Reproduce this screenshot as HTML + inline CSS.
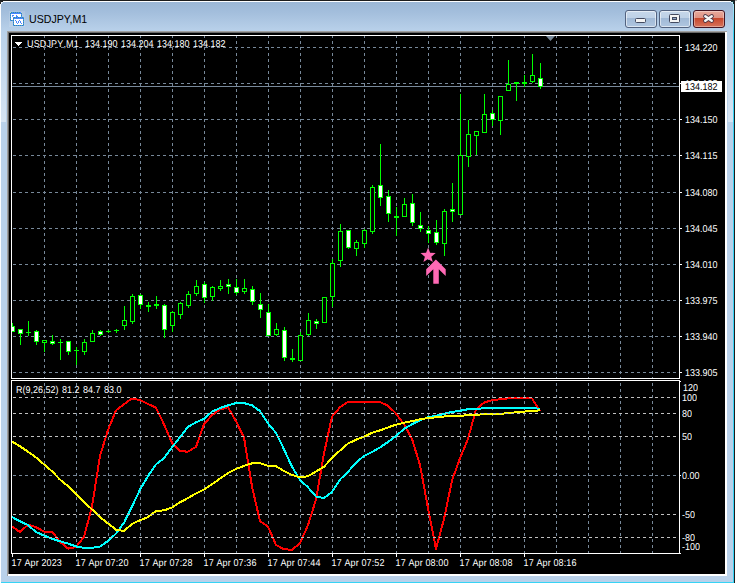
<!DOCTYPE html>
<html><head><meta charset="utf-8"><title>USDJPY,M1</title>
<style>
html,body{margin:0;padding:0;background:#fff;}
body{width:737px;height:583px;overflow:hidden;position:relative;font-family:"Liberation Sans",sans-serif;}
#win{position:absolute;left:0;top:0;width:735px;height:583px;background:#b9d1ea;overflow:hidden;}
#titlegrad{position:absolute;left:0;top:0;width:735px;height:31px;background:linear-gradient(#9ab6d5 0,#a3bedc 12px,#b9d1ea 31px);}
#bt{position:absolute;left:0;top:0;width:735px;height:1px;background:#1c1c1c;}
#wt{position:absolute;left:1px;top:1px;width:733px;height:1px;background:#fdfeff;}
#wl{position:absolute;left:0;top:3px;width:1px;height:580px;background:#fbfdff;}
#cr{position:absolute;left:733px;top:3px;width:1px;height:580px;background:linear-gradient(#a5e5f8 0,#8fe0f8 10px,#36d3f5 30px,#36d3f5 100%);}
#br{position:absolute;left:734px;top:2px;width:1px;height:581px;background:#1c1c1c;}
#cb{position:absolute;left:1px;top:582px;width:733px;height:1px;background:#36d3f5;}
#title{position:absolute;left:29px;top:12.4px;font-size:11.5px;line-height:15px;color:#000;white-space:nowrap;transform-origin:0 0;transform:scaleX(0.922);}
.btn{position:absolute;top:10px;width:30px;height:16px;border:1px solid #52627f;border-radius:3px;background:linear-gradient(#c6d7ea 0,#bed1e7 7px,#a0b9d6 7px,#b0c6e0 16px);box-shadow:inset 0 0 0 1px rgba(255,255,255,.55);}
#bclose{border-color:#431422;background:linear-gradient(#e9a99c 0,#df9283 7px,#c7452b 7px,#d5735c 16px);box-shadow:inset 0 0 0 1px rgba(255,255,255,.35);}
#client{position:absolute;left:7px;top:31px;width:720px;height:545px;background:#000;}
svg{position:absolute;left:0;top:0;}
.t{position:absolute;font-kerning:none;text-rendering:geometricPrecision;transform:scaleY(1.1);transform-origin:0 8px;font-size:9px;line-height:10px;color:#fff;white-space:nowrap;}
</style></head><body>
<div id="win">
<div id="titlegrad"></div>
<div id="bt"></div><div id="wt"></div><div id="wl"></div><div id="cr"></div><div id="br"></div><div id="cb"></div>
<div style="position:absolute;left:1px;top:31px;width:5px;height:91px;background:linear-gradient(rgba(255,255,255,0),rgba(255,255,255,.42))"></div><div style="position:absolute;left:728px;top:31px;width:5px;height:91px;background:linear-gradient(rgba(255,255,255,0),rgba(255,255,255,.42))"></div>
<div id="title">USDJPY,M1</div>
<div class="btn" style="left:625px"></div>
<div class="btn" style="left:659px"></div>
<div class="btn" id="bclose" style="left:693px"></div>
</div>

<svg width="737" height="583" viewBox="0 0 737 583">
<g shape-rendering="crispEdges">
<rect x="0" y="0" width="3" height="2" fill="#1c1c1c"/><rect x="0" y="1" width="1" height="3" fill="#2a2a2a"/><rect x="1" y="2" width="1" height="2" fill="#e8f0f8"/><rect x="2" y="2" width="1" height="1" fill="#dce8f4"/>
<rect x="731" y="1" width="3" height="1" fill="#143840"/><rect x="733" y="2" width="1" height="2" fill="#143840"/><rect x="734" y="0" width="1" height="4" fill="#1c1c1c"/><rect x="731" y="2" width="2" height="1" fill="#c8ecf8"/><rect x="732" y="3" width="1" height="1" fill="#a8e4f6"/><rect x="735" y="0" width="2" height="1" fill="#aaa"/>
<rect x="7" y="31" width="720" height="545" fill="#a0a0a0"/>
<rect x="8" y="32" width="719" height="544" fill="#ffffff"/>
<rect x="8" y="32" width="717" height="542" fill="#696969"/>
<rect x="9" y="33" width="716" height="541" fill="#000"/>
<g><rect x="9" y="11" width="16" height="16" fill="#fff" opacity=".12"/><rect x="10" y="12" width="12" height="9" fill="#4a86ff"/><rect x="11" y="14" width="10" height="6" fill="#fff"/><rect x="12" y="15" width="2" height="1" fill="#4a86ff"/><rect x="12" y="16" width="1" height="1" fill="#7aa6ff"/><rect x="16" y="15" width="1" height="1" fill="#4a86ff"/><rect x="16" y="16" width="2" height="1" fill="#4a86ff"/><rect x="13" y="17" width="11" height="9" fill="#4a86ff"/><rect x="14" y="19" width="9" height="6" fill="#fff"/><g stroke="#2e9a78" stroke-opacity=".75" stroke-dasharray="1 1" fill="none"><path d="M11 12.5H22"/><path d="M10.5 13V21"/><path d="M14 17.5H24"/><path d="M13.5 18V26"/><path d="M23.5 18V26"/><path d="M14 25.5H24"/><path d="M21.5 13V17"/><path d="M11 20.5H13"/></g><rect x="10" y="12" width="1" height="1" fill="#b4cce6"/><rect x="21" y="12" width="1" height="1" fill="#b4cce6"/><g fill="#4a86ff"><rect x="15" y="20" width="1" height="1"/><rect x="16" y="21" width="1" height="1"/><rect x="16" y="22" width="1" height="1"/><rect x="17" y="23" width="1" height="1"/><rect x="18" y="22" width="1" height="1"/><rect x="18" y="21" width="1" height="1"/><rect x="19" y="20" width="1" height="1"/><rect x="20" y="21" width="1" height="1"/><rect x="20" y="22" width="1" height="1"/><rect x="21" y="23" width="1" height="1"/></g></g>
<rect x="635.5" y="18.5" width="10" height="4" rx="1" fill="#f4f4f4" stroke="#434a60" shape-rendering="auto"/>
<rect x="669.5" y="14.5" width="10" height="8" rx="1" fill="#f4f4f4" stroke="#434a60" shape-rendering="auto"/><rect x="672.5" y="17.5" width="4" height="2" fill="#8ea6c6" stroke="#434a60"/>
<g shape-rendering="auto" stroke-linecap="round" fill="none"><path d="M705.3 16.3L711.7 20.7M711.7 16.3L705.3 20.7" stroke="#4d3848" stroke-width="4.3"/><path d="M705.3 16.3L711.7 20.7M711.7 16.3L705.3 20.7" stroke="#f6f6f6" stroke-width="2.5"/></g>
<line x1="12" y1="47.5" x2="679" y2="47.5" stroke="#778899" stroke-dasharray="3 3" stroke-dashoffset="5"/>
<line x1="12" y1="83.5" x2="679" y2="83.5" stroke="#778899" stroke-dasharray="3 3" stroke-dashoffset="5"/>
<line x1="12" y1="119.5" x2="679" y2="119.5" stroke="#778899" stroke-dasharray="3 3" stroke-dashoffset="5"/>
<line x1="12" y1="155.5" x2="679" y2="155.5" stroke="#778899" stroke-dasharray="3 3" stroke-dashoffset="5"/>
<line x1="12" y1="192.5" x2="679" y2="192.5" stroke="#778899" stroke-dasharray="3 3" stroke-dashoffset="5"/>
<line x1="12" y1="228.5" x2="679" y2="228.5" stroke="#778899" stroke-dasharray="3 3" stroke-dashoffset="5"/>
<line x1="12" y1="264.5" x2="679" y2="264.5" stroke="#778899" stroke-dasharray="3 3" stroke-dashoffset="5"/>
<line x1="12" y1="300.5" x2="679" y2="300.5" stroke="#778899" stroke-dasharray="3 3" stroke-dashoffset="5"/>
<line x1="12" y1="336.5" x2="679" y2="336.5" stroke="#778899" stroke-dasharray="3 3" stroke-dashoffset="5"/>
<line x1="12" y1="372.5" x2="679" y2="372.5" stroke="#778899" stroke-dasharray="3 3" stroke-dashoffset="5"/>
<line x1="44.5" y1="36" x2="44.5" y2="378" stroke="#778899" stroke-dasharray="3 3" stroke-dashoffset="1"/>
<line x1="44.5" y1="381" x2="44.5" y2="553" stroke="#778899" stroke-dasharray="3 3" stroke-dashoffset="4"/>
<line x1="76.5" y1="36" x2="76.5" y2="378" stroke="#778899" stroke-dasharray="3 3" stroke-dashoffset="1"/>
<line x1="76.5" y1="381" x2="76.5" y2="553" stroke="#778899" stroke-dasharray="3 3" stroke-dashoffset="4"/>
<line x1="108.5" y1="36" x2="108.5" y2="378" stroke="#778899" stroke-dasharray="3 3" stroke-dashoffset="1"/>
<line x1="108.5" y1="381" x2="108.5" y2="553" stroke="#778899" stroke-dasharray="3 3" stroke-dashoffset="4"/>
<line x1="140.5" y1="36" x2="140.5" y2="378" stroke="#778899" stroke-dasharray="3 3" stroke-dashoffset="1"/>
<line x1="140.5" y1="381" x2="140.5" y2="553" stroke="#778899" stroke-dasharray="3 3" stroke-dashoffset="4"/>
<line x1="172.5" y1="36" x2="172.5" y2="378" stroke="#778899" stroke-dasharray="3 3" stroke-dashoffset="1"/>
<line x1="172.5" y1="381" x2="172.5" y2="553" stroke="#778899" stroke-dasharray="3 3" stroke-dashoffset="4"/>
<line x1="204.5" y1="36" x2="204.5" y2="378" stroke="#778899" stroke-dasharray="3 3" stroke-dashoffset="1"/>
<line x1="204.5" y1="381" x2="204.5" y2="553" stroke="#778899" stroke-dasharray="3 3" stroke-dashoffset="4"/>
<line x1="236.5" y1="36" x2="236.5" y2="378" stroke="#778899" stroke-dasharray="3 3" stroke-dashoffset="1"/>
<line x1="236.5" y1="381" x2="236.5" y2="553" stroke="#778899" stroke-dasharray="3 3" stroke-dashoffset="4"/>
<line x1="268.5" y1="36" x2="268.5" y2="378" stroke="#778899" stroke-dasharray="3 3" stroke-dashoffset="1"/>
<line x1="268.5" y1="381" x2="268.5" y2="553" stroke="#778899" stroke-dasharray="3 3" stroke-dashoffset="4"/>
<line x1="300.5" y1="36" x2="300.5" y2="378" stroke="#778899" stroke-dasharray="3 3" stroke-dashoffset="1"/>
<line x1="300.5" y1="381" x2="300.5" y2="553" stroke="#778899" stroke-dasharray="3 3" stroke-dashoffset="4"/>
<line x1="332.5" y1="36" x2="332.5" y2="378" stroke="#778899" stroke-dasharray="3 3" stroke-dashoffset="1"/>
<line x1="332.5" y1="381" x2="332.5" y2="553" stroke="#778899" stroke-dasharray="3 3" stroke-dashoffset="4"/>
<line x1="364.5" y1="36" x2="364.5" y2="378" stroke="#778899" stroke-dasharray="3 3" stroke-dashoffset="1"/>
<line x1="364.5" y1="381" x2="364.5" y2="553" stroke="#778899" stroke-dasharray="3 3" stroke-dashoffset="4"/>
<line x1="396.5" y1="36" x2="396.5" y2="378" stroke="#778899" stroke-dasharray="3 3" stroke-dashoffset="1"/>
<line x1="396.5" y1="381" x2="396.5" y2="553" stroke="#778899" stroke-dasharray="3 3" stroke-dashoffset="4"/>
<line x1="428.5" y1="36" x2="428.5" y2="378" stroke="#778899" stroke-dasharray="3 3" stroke-dashoffset="1"/>
<line x1="428.5" y1="381" x2="428.5" y2="553" stroke="#778899" stroke-dasharray="3 3" stroke-dashoffset="4"/>
<line x1="460.5" y1="36" x2="460.5" y2="378" stroke="#778899" stroke-dasharray="3 3" stroke-dashoffset="1"/>
<line x1="460.5" y1="381" x2="460.5" y2="553" stroke="#778899" stroke-dasharray="3 3" stroke-dashoffset="4"/>
<line x1="492.5" y1="36" x2="492.5" y2="378" stroke="#778899" stroke-dasharray="3 3" stroke-dashoffset="1"/>
<line x1="492.5" y1="381" x2="492.5" y2="553" stroke="#778899" stroke-dasharray="3 3" stroke-dashoffset="4"/>
<line x1="524.5" y1="36" x2="524.5" y2="378" stroke="#778899" stroke-dasharray="3 3" stroke-dashoffset="1"/>
<line x1="524.5" y1="381" x2="524.5" y2="553" stroke="#778899" stroke-dasharray="3 3" stroke-dashoffset="4"/>
<line x1="556.5" y1="36" x2="556.5" y2="378" stroke="#778899" stroke-dasharray="3 3" stroke-dashoffset="1"/>
<line x1="556.5" y1="381" x2="556.5" y2="553" stroke="#778899" stroke-dasharray="3 3" stroke-dashoffset="4"/>
<line x1="588.5" y1="36" x2="588.5" y2="378" stroke="#778899" stroke-dasharray="3 3" stroke-dashoffset="1"/>
<line x1="588.5" y1="381" x2="588.5" y2="553" stroke="#778899" stroke-dasharray="3 3" stroke-dashoffset="4"/>
<line x1="620.5" y1="36" x2="620.5" y2="378" stroke="#778899" stroke-dasharray="3 3" stroke-dashoffset="1"/>
<line x1="620.5" y1="381" x2="620.5" y2="553" stroke="#778899" stroke-dasharray="3 3" stroke-dashoffset="4"/>
<line x1="652.5" y1="36" x2="652.5" y2="378" stroke="#778899" stroke-dasharray="3 3" stroke-dashoffset="1"/>
<line x1="652.5" y1="381" x2="652.5" y2="553" stroke="#778899" stroke-dasharray="3 3" stroke-dashoffset="4"/>
<line x1="12" y1="475.5" x2="679" y2="475.5" stroke="#778899" stroke-dasharray="3 3" stroke-dashoffset="5"/>
<rect x="12" y="86" width="667" height="1" fill="#778899"/>
<polygon points="546,36 555,36 550.5,41" fill="#778899" shape-rendering="auto"/>
<clipPath id="mc"><rect x="12" y="36" width="667" height="342"/></clipPath><g clip-path="url(#mc)">
<rect x="12" y="323" width="1" height="9" fill="#00ff00"/>
<rect x="10" y="326" width="5" height="6" fill="#00ff00"/>
<rect x="11" y="327" width="3" height="4" fill="#fff"/>
<rect x="20" y="329" width="1" height="16" fill="#00ff00"/>
<rect x="18" y="329" width="5" height="5" fill="#00ff00"/>
<rect x="19" y="330" width="3" height="3" fill="#fff"/>
<rect x="28" y="321" width="1" height="15" fill="#00ff00"/>
<rect x="26" y="332" width="5" height="1" fill="#00ff00"/>
<rect x="36" y="330" width="1" height="15" fill="#00ff00"/>
<rect x="34" y="331" width="5" height="11" fill="#00ff00"/>
<rect x="35" y="332" width="3" height="9" fill="#fff"/>
<rect x="44" y="340" width="1" height="12" fill="#00ff00"/>
<rect x="42" y="340" width="5" height="3" fill="#00ff00"/>
<rect x="43" y="341" width="3" height="1" fill="#000"/>
<rect x="52" y="335" width="1" height="10" fill="#00ff00"/>
<rect x="50" y="341" width="5" height="3" fill="#00ff00"/>
<rect x="51" y="342" width="3" height="1" fill="#fff"/>
<rect x="60" y="339" width="1" height="21" fill="#00ff00"/>
<rect x="58" y="342" width="5" height="1" fill="#00ff00"/>
<rect x="68" y="341" width="1" height="14" fill="#00ff00"/>
<rect x="66" y="341" width="5" height="11" fill="#00ff00"/>
<rect x="67" y="342" width="3" height="9" fill="#fff"/>
<rect x="76" y="347" width="1" height="18" fill="#00ff00"/>
<rect x="74" y="350" width="5" height="1" fill="#00ff00"/>
<rect x="84" y="339" width="1" height="16" fill="#00ff00"/>
<rect x="82" y="342" width="5" height="10" fill="#00ff00"/>
<rect x="83" y="343" width="3" height="8" fill="#000"/>
<rect x="92" y="330" width="1" height="12" fill="#00ff00"/>
<rect x="90" y="333" width="5" height="9" fill="#00ff00"/>
<rect x="91" y="334" width="3" height="7" fill="#000"/>
<rect x="100" y="330" width="1" height="6" fill="#00ff00"/>
<rect x="98" y="331" width="5" height="4" fill="#00ff00"/>
<rect x="99" y="332" width="3" height="2" fill="#fff"/>
<rect x="108" y="330" width="1" height="3" fill="#00ff00"/>
<rect x="106" y="331" width="5" height="1" fill="#00ff00"/>
<rect x="116" y="329" width="1" height="4" fill="#00ff00"/>
<rect x="114" y="330" width="5" height="1" fill="#00ff00"/>
<rect x="124" y="306" width="1" height="24" fill="#00ff00"/>
<rect x="122" y="320" width="5" height="6" fill="#00ff00"/>
<rect x="123" y="321" width="3" height="4" fill="#000"/>
<rect x="132" y="294" width="1" height="30" fill="#00ff00"/>
<rect x="130" y="296" width="5" height="26" fill="#00ff00"/>
<rect x="131" y="297" width="3" height="24" fill="#000"/>
<rect x="140" y="294" width="1" height="15" fill="#00ff00"/>
<rect x="138" y="295" width="5" height="10" fill="#00ff00"/>
<rect x="139" y="296" width="3" height="8" fill="#fff"/>
<rect x="148" y="302" width="1" height="10" fill="#00ff00"/>
<rect x="146" y="305" width="5" height="2" fill="#00ff00"/>
<rect x="156" y="296" width="1" height="13" fill="#00ff00"/>
<rect x="154" y="304" width="5" height="2" fill="#00ff00"/>
<rect x="164" y="304" width="1" height="34" fill="#00ff00"/>
<rect x="162" y="305" width="5" height="25" fill="#00ff00"/>
<rect x="163" y="306" width="3" height="23" fill="#fff"/>
<rect x="172" y="311" width="1" height="21" fill="#00ff00"/>
<rect x="170" y="312" width="5" height="14" fill="#00ff00"/>
<rect x="171" y="313" width="3" height="12" fill="#000"/>
<rect x="180" y="302" width="1" height="17" fill="#00ff00"/>
<rect x="178" y="303" width="5" height="12" fill="#00ff00"/>
<rect x="179" y="304" width="3" height="10" fill="#000"/>
<rect x="188" y="291" width="1" height="17" fill="#00ff00"/>
<rect x="186" y="294" width="5" height="12" fill="#00ff00"/>
<rect x="187" y="295" width="3" height="10" fill="#000"/>
<rect x="196" y="280" width="1" height="16" fill="#00ff00"/>
<rect x="194" y="286" width="5" height="8" fill="#00ff00"/>
<rect x="195" y="287" width="3" height="6" fill="#000"/>
<rect x="204" y="282" width="1" height="21" fill="#00ff00"/>
<rect x="202" y="284" width="5" height="14" fill="#00ff00"/>
<rect x="203" y="285" width="3" height="12" fill="#fff"/>
<rect x="212" y="286" width="1" height="15" fill="#00ff00"/>
<rect x="210" y="287" width="5" height="10" fill="#00ff00"/>
<rect x="211" y="288" width="3" height="8" fill="#000"/>
<rect x="220" y="280" width="1" height="11" fill="#00ff00"/>
<rect x="218" y="286" width="5" height="3" fill="#00ff00"/>
<rect x="219" y="287" width="3" height="1" fill="#000"/>
<rect x="228" y="279" width="1" height="15" fill="#00ff00"/>
<rect x="226" y="284" width="5" height="3" fill="#00ff00"/>
<rect x="227" y="285" width="3" height="1" fill="#fff"/>
<rect x="236" y="279" width="1" height="16" fill="#00ff00"/>
<rect x="234" y="287" width="5" height="6" fill="#00ff00"/>
<rect x="235" y="288" width="3" height="4" fill="#fff"/>
<rect x="244" y="279" width="1" height="15" fill="#00ff00"/>
<rect x="242" y="288" width="5" height="4" fill="#00ff00"/>
<rect x="243" y="289" width="3" height="2" fill="#000"/>
<rect x="252" y="286" width="1" height="19" fill="#00ff00"/>
<rect x="250" y="289" width="5" height="13" fill="#00ff00"/>
<rect x="251" y="290" width="3" height="11" fill="#fff"/>
<rect x="260" y="293" width="1" height="25" fill="#00ff00"/>
<rect x="258" y="304" width="5" height="6" fill="#00ff00"/>
<rect x="259" y="305" width="3" height="4" fill="#fff"/>
<rect x="268" y="304" width="1" height="32" fill="#00ff00"/>
<rect x="266" y="312" width="5" height="24" fill="#00ff00"/>
<rect x="267" y="313" width="3" height="22" fill="#fff"/>
<rect x="276" y="323" width="1" height="13" fill="#00ff00"/>
<rect x="274" y="329" width="5" height="6" fill="#00ff00"/>
<rect x="275" y="330" width="3" height="4" fill="#000"/>
<rect x="284" y="327" width="1" height="34" fill="#00ff00"/>
<rect x="282" y="330" width="5" height="28" fill="#00ff00"/>
<rect x="283" y="331" width="3" height="26" fill="#fff"/>
<rect x="292" y="349" width="1" height="13" fill="#00ff00"/>
<rect x="290" y="358" width="5" height="2" fill="#00ff00"/>
<rect x="300" y="332" width="1" height="29" fill="#00ff00"/>
<rect x="298" y="335" width="5" height="26" fill="#00ff00"/>
<rect x="299" y="336" width="3" height="24" fill="#000"/>
<rect x="308" y="313" width="1" height="23" fill="#00ff00"/>
<rect x="306" y="320" width="5" height="15" fill="#00ff00"/>
<rect x="307" y="321" width="3" height="13" fill="#000"/>
<rect x="316" y="319" width="1" height="10" fill="#00ff00"/>
<rect x="314" y="321" width="5" height="3" fill="#00ff00"/>
<rect x="315" y="322" width="3" height="1" fill="#fff"/>
<rect x="324" y="297" width="1" height="26" fill="#00ff00"/>
<rect x="322" y="297" width="5" height="26" fill="#00ff00"/>
<rect x="323" y="298" width="3" height="24" fill="#000"/>
<rect x="332" y="259" width="1" height="48" fill="#00ff00"/>
<rect x="330" y="263" width="5" height="34" fill="#00ff00"/>
<rect x="331" y="264" width="3" height="32" fill="#000"/>
<rect x="340" y="224" width="1" height="43" fill="#00ff00"/>
<rect x="338" y="231" width="5" height="30" fill="#00ff00"/>
<rect x="339" y="232" width="3" height="28" fill="#000"/>
<rect x="348" y="230" width="1" height="19" fill="#00ff00"/>
<rect x="346" y="230" width="5" height="18" fill="#00ff00"/>
<rect x="347" y="231" width="3" height="16" fill="#fff"/>
<rect x="356" y="240" width="1" height="16" fill="#00ff00"/>
<rect x="354" y="242" width="5" height="7" fill="#00ff00"/>
<rect x="355" y="243" width="3" height="5" fill="#000"/>
<rect x="364" y="229" width="1" height="19" fill="#00ff00"/>
<rect x="362" y="230" width="5" height="14" fill="#00ff00"/>
<rect x="363" y="231" width="3" height="12" fill="#000"/>
<rect x="372" y="185" width="1" height="49" fill="#00ff00"/>
<rect x="370" y="187" width="5" height="45" fill="#00ff00"/>
<rect x="371" y="188" width="3" height="43" fill="#000"/>
<rect x="380" y="144" width="1" height="62" fill="#00ff00"/>
<rect x="378" y="185" width="5" height="13" fill="#00ff00"/>
<rect x="379" y="186" width="3" height="11" fill="#fff"/>
<rect x="388" y="190" width="1" height="32" fill="#00ff00"/>
<rect x="386" y="196" width="5" height="18" fill="#00ff00"/>
<rect x="387" y="197" width="3" height="16" fill="#fff"/>
<rect x="396" y="207" width="1" height="29" fill="#00ff00"/>
<rect x="394" y="216" width="5" height="2" fill="#00ff00"/>
<rect x="404" y="198" width="1" height="19" fill="#00ff00"/>
<rect x="402" y="204" width="5" height="13" fill="#00ff00"/>
<rect x="403" y="205" width="3" height="11" fill="#000"/>
<rect x="412" y="194" width="1" height="32" fill="#00ff00"/>
<rect x="410" y="203" width="5" height="20" fill="#00ff00"/>
<rect x="411" y="204" width="3" height="18" fill="#fff"/>
<rect x="420" y="212" width="1" height="20" fill="#00ff00"/>
<rect x="418" y="225" width="5" height="4" fill="#00ff00"/>
<rect x="419" y="226" width="3" height="2" fill="#fff"/>
<rect x="428" y="226" width="1" height="17" fill="#00ff00"/>
<rect x="426" y="230" width="5" height="4" fill="#00ff00"/>
<rect x="427" y="231" width="3" height="2" fill="#fff"/>
<rect x="436" y="220" width="1" height="25" fill="#00ff00"/>
<rect x="434" y="232" width="5" height="11" fill="#00ff00"/>
<rect x="435" y="233" width="3" height="9" fill="#fff"/>
<rect x="444" y="209" width="1" height="47" fill="#00ff00"/>
<rect x="442" y="211" width="5" height="33" fill="#00ff00"/>
<rect x="443" y="212" width="3" height="31" fill="#000"/>
<rect x="452" y="183" width="1" height="39" fill="#00ff00"/>
<rect x="450" y="209" width="5" height="3" fill="#00ff00"/>
<rect x="451" y="210" width="3" height="1" fill="#fff"/>
<rect x="460" y="94" width="1" height="121" fill="#00ff00"/>
<rect x="458" y="155" width="5" height="60" fill="#00ff00"/>
<rect x="459" y="156" width="3" height="58" fill="#000"/>
<rect x="468" y="120" width="1" height="47" fill="#00ff00"/>
<rect x="466" y="134" width="5" height="23" fill="#00ff00"/>
<rect x="467" y="135" width="3" height="21" fill="#000"/>
<rect x="476" y="131" width="1" height="24" fill="#00ff00"/>
<rect x="474" y="131" width="5" height="5" fill="#00ff00"/>
<rect x="475" y="132" width="3" height="3" fill="#000"/>
<rect x="484" y="94" width="1" height="39" fill="#00ff00"/>
<rect x="482" y="114" width="5" height="19" fill="#00ff00"/>
<rect x="483" y="115" width="3" height="17" fill="#000"/>
<rect x="492" y="110" width="1" height="16" fill="#00ff00"/>
<rect x="490" y="113" width="5" height="7" fill="#00ff00"/>
<rect x="491" y="114" width="3" height="5" fill="#fff"/>
<rect x="500" y="96" width="1" height="39" fill="#00ff00"/>
<rect x="498" y="96" width="5" height="25" fill="#00ff00"/>
<rect x="499" y="97" width="3" height="23" fill="#000"/>
<rect x="508" y="60" width="1" height="31" fill="#00ff00"/>
<rect x="506" y="84" width="5" height="7" fill="#00ff00"/>
<rect x="507" y="85" width="3" height="5" fill="#000"/>
<rect x="516" y="82" width="1" height="19" fill="#00ff00"/>
<rect x="514" y="82" width="5" height="2" fill="#00ff00"/>
<rect x="524" y="75" width="1" height="12" fill="#00ff00"/>
<rect x="522" y="82" width="5" height="2" fill="#00ff00"/>
<rect x="532" y="54" width="1" height="29" fill="#00ff00"/>
<rect x="530" y="75" width="5" height="7" fill="#00ff00"/>
<rect x="531" y="76" width="3" height="5" fill="#000"/>
<rect x="540" y="63" width="1" height="26" fill="#00ff00"/>
<rect x="538" y="78" width="5" height="9" fill="#00ff00"/>
<rect x="539" y="79" width="3" height="7" fill="#fff"/>
</g>
</g>
<polygon points="428.1,247.6 430.1,252.8 435.7,253.1 431.3,256.7 432.8,262.1 428.1,259.0 423.4,262.1 424.9,256.7 420.5,253.1 426.1,252.8" fill="#ff69b4"/>
<polygon points="435.9,259.4 445.7,269.3 445.7,276 438.8,269.2 438.8,283.8 433.3,283.8 433.3,269.2 426.2,276 426.2,269.3" fill="#ff69b4"/>
<clipPath id="ic"><rect x="12" y="381" width="667" height="172"/></clipPath><g clip-path="url(#ic)">
<polyline points="12,526.6 20,532.0 28,524.8 36,527.1 44,531.6 52,531.6 60,541.8 68,548.6 76,547.0 84,536.7 92,506.6 100,456.0 108,430.0 116,410.4 124,404.2 132,398.5 140,400.0 148,403.9 156,407.8 164,424.3 172,442.8 180,451.3 188,451.6 196,446.8 204,424.3 212,415.0 220,409.6 228,407.3 236,421.2 244,437.4 252,486.5 260,521.2 268,526.6 276,544.9 284,549.3 292,549.7 300,543.2 308,525.1 316,499.6 324,453.5 332,416.5 340,407.3 348,401.9 356,401.9 364,401.9 372,401.9 380,402.0 388,405.7 396,413.5 404,424.3 412,438.9 420,465.0 428,508.1 436,549.0 444,518.9 452,480.5 460,458.2 468,439.0 476,409.5 484,402.7 492,400.1 500,399.3 508,398.4 516,398.4 524,398.4 532,398.4 540,411.2" fill="none" stroke="#ff0000" stroke-width="2" stroke-linejoin="round" shape-rendering="crispEdges"/>
<polyline points="12,517.1 20,521.2 28,525.1 36,532.0 44,535.6 52,538.7 60,541.3 68,543.6 76,546.4 84,547.9 92,547.9 100,546.5 108,541.0 116,533.6 124,522.8 132,506.6 140,489.6 148,476.0 156,464.4 164,458.2 172,447.4 180,437.1 188,426.9 196,422.3 204,418.9 212,411.6 220,408.1 228,405.3 236,403.1 244,403.1 252,405.3 260,411.1 268,423.5 276,432.8 284,449.3 292,466.7 300,480.0 308,487.3 316,496.5 324,498.1 332,491.9 340,479.6 348,471.7 356,462.8 364,455.9 372,452.0 380,447.4 388,442.0 396,436.1 404,428.9 412,424.3 420,420.4 428,417.3 436,415.8 444,413.9 452,411.9 460,410.8 468,409.2 476,408.7 484,408.4 492,407.8 500,407.8 508,407.8 516,407.8 524,407.8 532,407.8 540,408.9" fill="none" stroke="#00ffff" stroke-width="2" stroke-linejoin="round" shape-rendering="crispEdges"/>
<polyline points="12,441.5 20,446.3 28,451.7 36,457.4 44,464.4 52,471.3 60,479.6 68,486.2 76,493.9 84,502.0 92,509.4 100,517.2 108,523.4 116,529.7 124,531.0 132,523.9 140,520.2 148,517.1 156,510.9 164,510.4 172,507.4 180,502.3 188,498.1 196,493.5 204,489.6 212,484.2 220,478.6 228,473.0 236,469.0 244,465.9 252,463.3 260,463.2 268,465.9 276,466.2 284,471.0 292,475.0 300,477.4 308,476.2 316,471.6 324,466.7 332,458.2 340,450.5 348,443.6 356,439.7 364,436.6 372,432.8 380,430.4 388,427.4 396,424.7 404,422.7 412,421.2 420,419.3 428,418.1 436,417.3 444,416.5 452,416.1 460,415.8 468,415.2 476,414.7 484,414.3 492,414.0 500,413.8 508,413.2 516,412.3 524,411.6 532,410.9 540,410.4" fill="none" stroke="#ffff00" stroke-width="2" stroke-linejoin="round" shape-rendering="crispEdges"/>
</g>
<g shape-rendering="crispEdges">
<line x1="12" y1="397.5" x2="679" y2="397.5" stroke="#c0c0c0" stroke-dasharray="3 3" stroke-dashoffset="5"/>
<line x1="12" y1="413.5" x2="679" y2="413.5" stroke="#c0c0c0" stroke-dasharray="3 3" stroke-dashoffset="5"/>
<line x1="12" y1="436.5" x2="679" y2="436.5" stroke="#c0c0c0" stroke-dasharray="3 3" stroke-dashoffset="5"/>
<line x1="12" y1="514.5" x2="679" y2="514.5" stroke="#c0c0c0" stroke-dasharray="3 3" stroke-dashoffset="5"/>
<line x1="12" y1="537.5" x2="679" y2="537.5" stroke="#c0c0c0" stroke-dasharray="3 3" stroke-dashoffset="5"/>
</g>
<g shape-rendering="crispEdges" fill="#fff">
<rect x="11" y="35" width="669" height="1"/><rect x="11" y="35" width="1" height="344"/><rect x="11" y="378" width="669" height="1"/><rect x="679" y="35" width="1" height="344"/>
<rect x="11" y="380" width="669" height="1"/><rect x="11" y="380" width="1" height="174"/><rect x="11" y="553" width="669" height="1"/><rect x="679" y="380" width="1" height="174"/>
<rect x="680" y="47" width="2" height="1"/>
<rect x="680" y="83" width="2" height="1"/>
<rect x="680" y="119" width="2" height="1"/>
<rect x="680" y="155" width="2" height="1"/>
<rect x="680" y="192" width="2" height="1"/>
<rect x="680" y="228" width="2" height="1"/>
<rect x="680" y="264" width="2" height="1"/>
<rect x="680" y="300" width="2" height="1"/>
<rect x="680" y="336" width="2" height="1"/>
<rect x="680" y="372" width="2" height="1"/>
<rect x="680" y="381" width="1" height="1"/>
<rect x="680" y="475" width="1" height="1"/>
<rect x="680" y="553" width="1" height="1"/>
<rect x="12" y="554" width="1" height="3"/>
<rect x="76" y="554" width="1" height="3"/>
<rect x="140" y="554" width="1" height="3"/>
<rect x="204" y="554" width="1" height="3"/>
<rect x="268" y="554" width="1" height="3"/>
<rect x="332" y="554" width="1" height="3"/>
<rect x="396" y="554" width="1" height="3"/>
<rect x="460" y="554" width="1" height="3"/>
<rect x="524" y="554" width="1" height="3"/>
<rect x="15" y="42" width="7" height="1"/><rect x="16" y="43" width="5" height="1"/><rect x="17" y="44" width="3" height="1"/><rect x="18" y="45" width="1" height="1"/>
</g>
</svg>
<div class="t" style="left:27px;top:39px;letter-spacing:0.15px">USDJPY,M1</div>
<div class="t" style="left:85px;top:39px;color:#fff">134.190</div>
<div class="t" style="left:121px;top:39px;color:#fff">134.204</div>
<div class="t" style="left:157px;top:39px;color:#fff">134.180</div>
<div class="t" style="left:193px;top:39px;color:#fff">134.182</div>
<div class="t" style="left:16px;top:385px;color:#fff">R(9,26,52)</div>
<div class="t" style="left:62px;top:385px;color:#fff">81.2</div>
<div class="t" style="left:83px;top:385px;color:#fff">84.7</div>
<div class="t" style="left:104px;top:385px;color:#fff">83.0</div>
<div class="t" style="left:685px;top:43px;color:#fff">134.220</div>
<div class="t" style="left:685px;top:115px;color:#fff">134.150</div>
<div class="t" style="left:685px;top:151px;color:#fff">134.115</div>
<div class="t" style="left:685px;top:188px;color:#fff">134.080</div>
<div class="t" style="left:685px;top:224px;color:#fff">134.045</div>
<div class="t" style="left:685px;top:260px;color:#fff">134.010</div>
<div class="t" style="left:685px;top:296px;color:#fff">133.975</div>
<div class="t" style="left:685px;top:332px;color:#fff">133.940</div>
<div class="t" style="left:685px;top:368px;color:#fff">133.905</div>
<div class="t" style="left:685px;top:79px;color:#fff">134.185</div>
<div style="position:absolute;left:681px;top:81px;width:41px;height:11px;background:#fff"></div>
<div class="t" style="left:685px;top:82px;color:#000">134.182</div>
<div class="t" style="left:682.9px;top:383px;color:#fff">120</div>
<div class="t" style="left:681.9px;top:393px;color:#fff">100</div>
<div class="t" style="left:681.9px;top:409px;color:#fff">80</div>
<div class="t" style="left:681.9px;top:432px;color:#fff">50</div>
<div class="t" style="left:681.9px;top:471px;color:#fff">0.00</div>
<div class="t" style="left:681.9px;top:510px;color:#fff">-50</div>
<div class="t" style="left:681.9px;top:533px;color:#fff">-80</div>
<div class="t" style="left:681.9px;top:542px;color:#fff">-100</div>
<div class="t" style="left:11.6px;top:558px;letter-spacing:0.12px">17 Apr 2023</div>
<div class="t" style="left:75.6px;top:558px;letter-spacing:0.12px">17 Apr 07:20</div>
<div class="t" style="left:139.6px;top:558px;letter-spacing:0.12px">17 Apr 07:28</div>
<div class="t" style="left:203.6px;top:558px;letter-spacing:0.12px">17 Apr 07:36</div>
<div class="t" style="left:267.6px;top:558px;letter-spacing:0.12px">17 Apr 07:44</div>
<div class="t" style="left:331.6px;top:558px;letter-spacing:0.12px">17 Apr 07:52</div>
<div class="t" style="left:395.6px;top:558px;letter-spacing:0.12px">17 Apr 08:00</div>
<div class="t" style="left:459.6px;top:558px;letter-spacing:0.12px">17 Apr 08:08</div>
<div class="t" style="left:523.6px;top:558px;letter-spacing:0.12px">17 Apr 08:16</div>
</body></html>
